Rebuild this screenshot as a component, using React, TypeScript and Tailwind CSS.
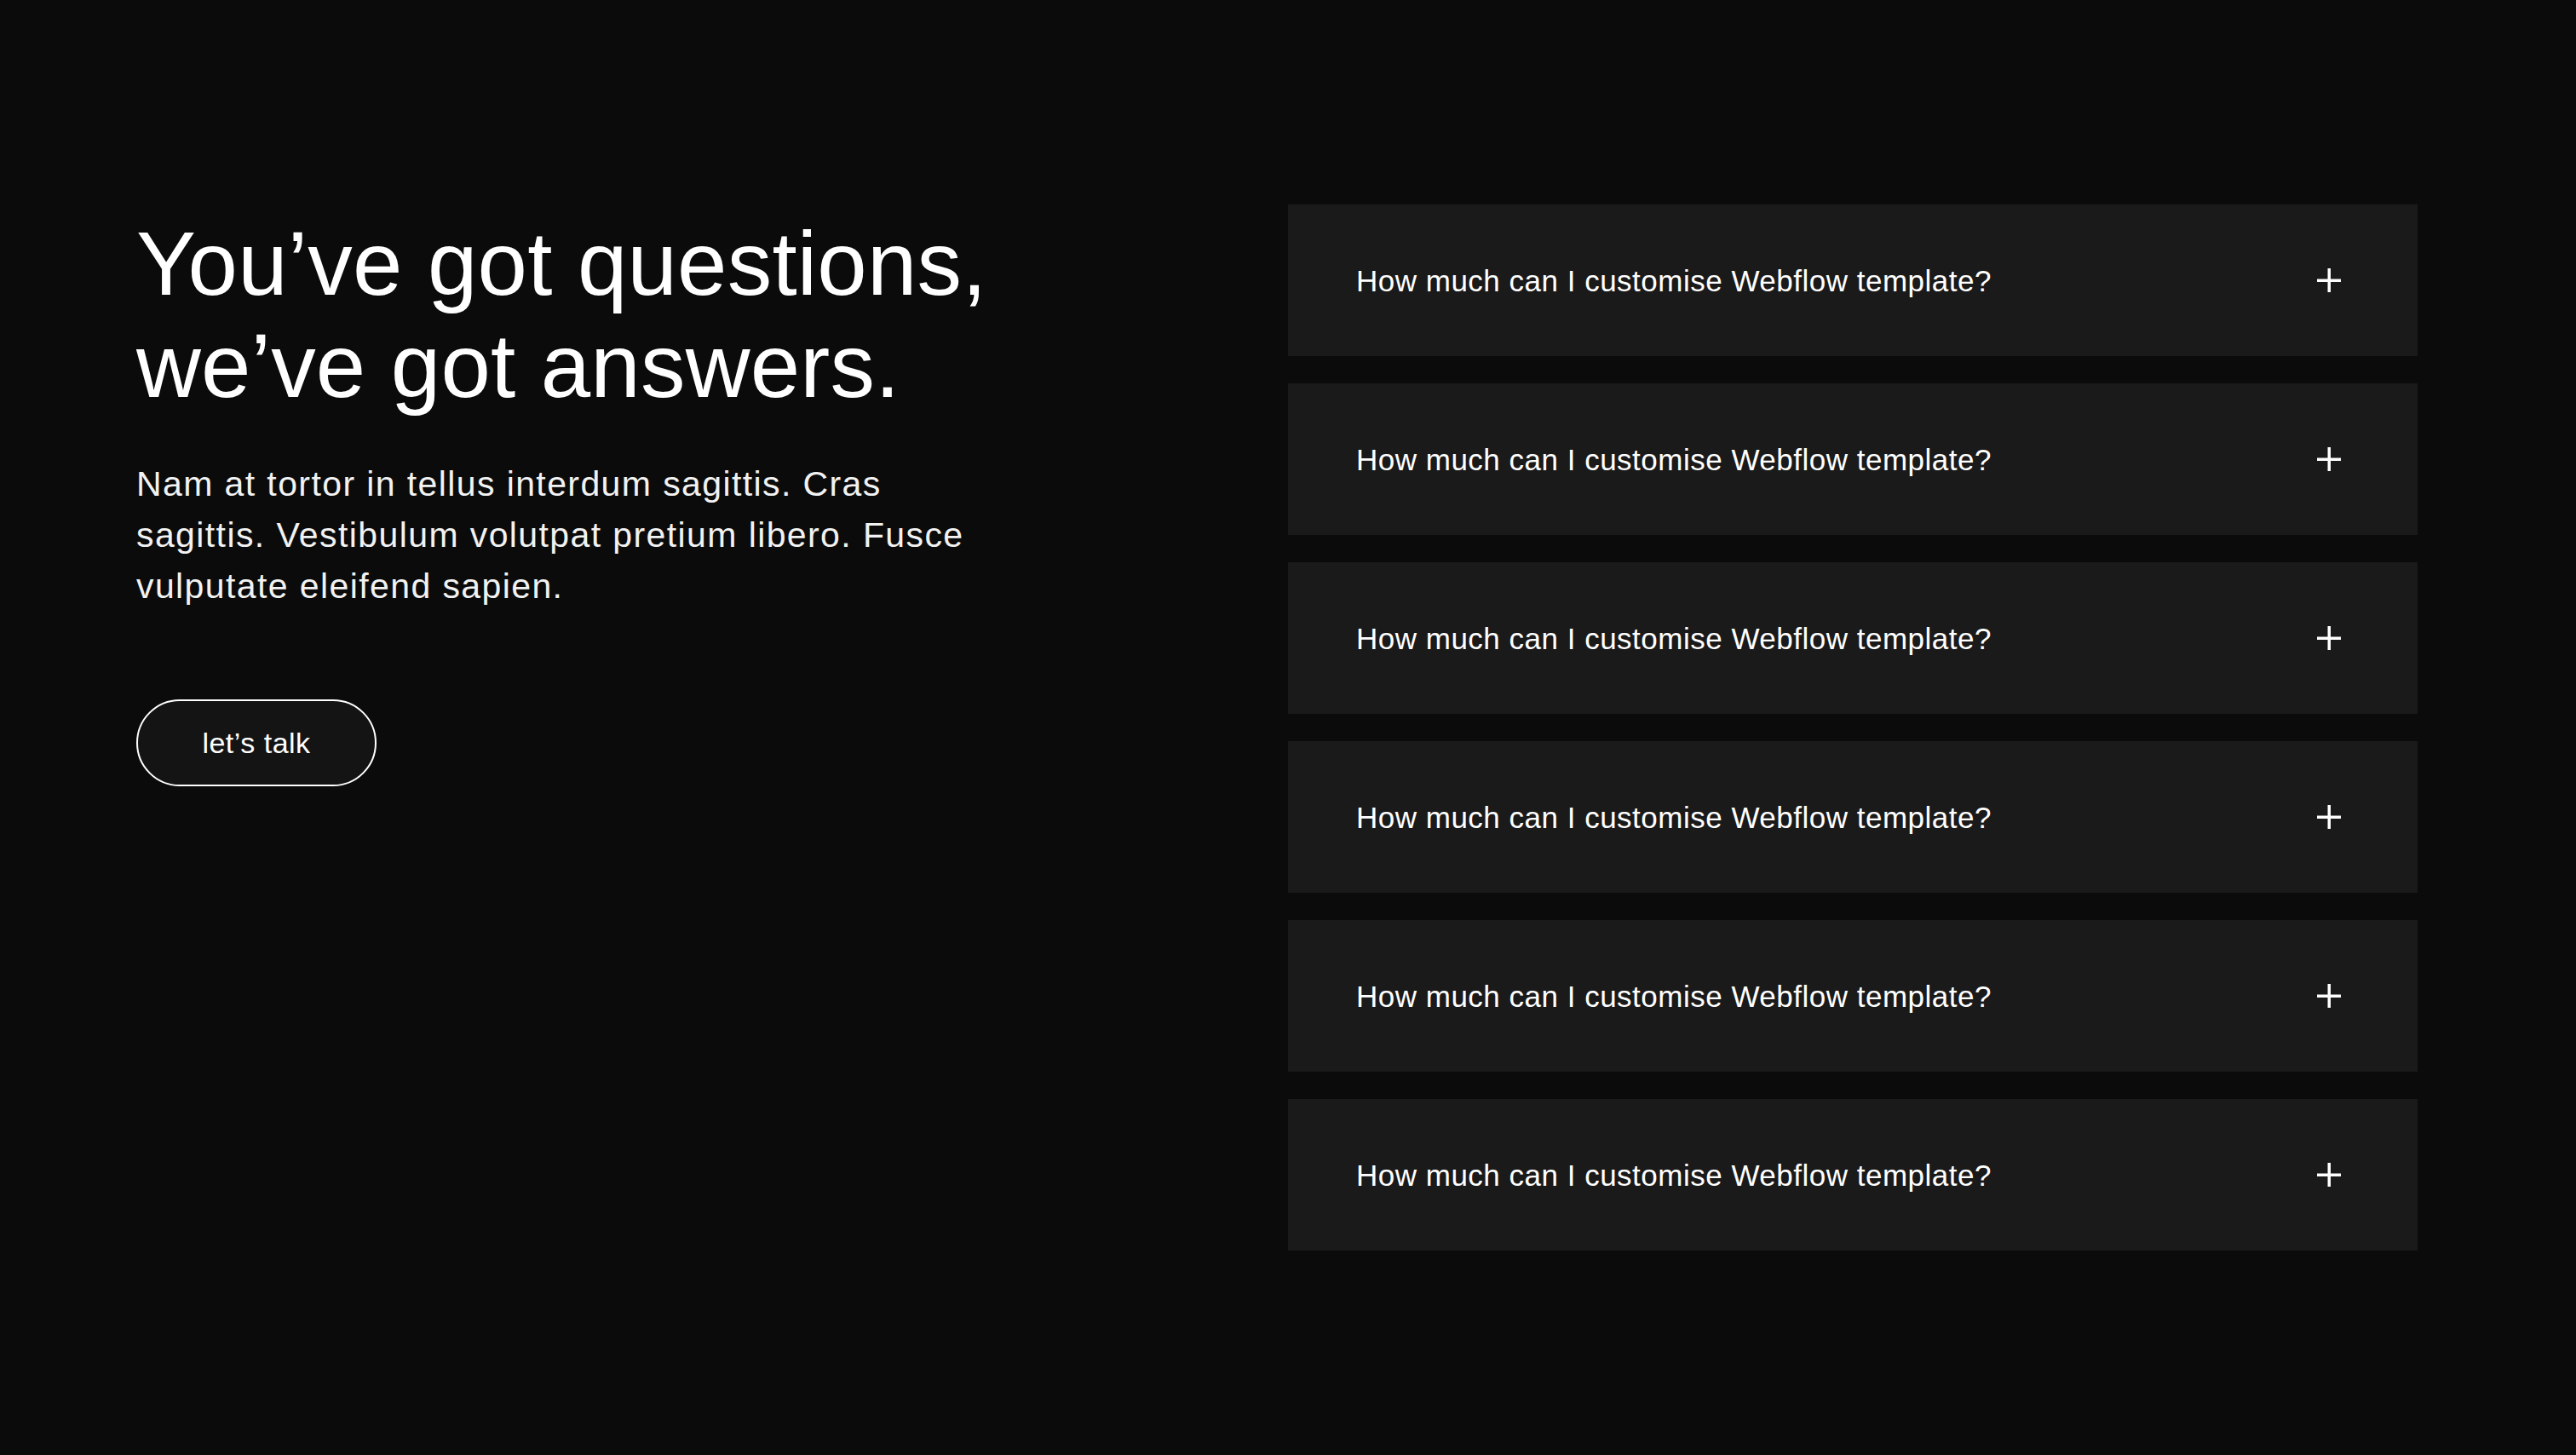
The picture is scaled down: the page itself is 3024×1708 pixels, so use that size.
import React from "react";

const questions = Array.from({ length: 6 }, () => "How much can I customise Webflow template?");

function PlusIcon() {
  return (
    <svg width="28" height="28" viewBox="0 0 28 28" fill="none">
      <rect x="12.5" y="0" width="3.5" height="28" fill="#ffffff" />
      <rect x="0" y="12.5" width="28" height="3.5" fill="#ffffff" />
    </svg>
  );
}

export default function App() {
  return (
    <main
      className="min-h-screen w-full bg-[#0b0b0b] text-white"
      style={{ fontFamily: '"Helvetica Neue", "Liberation Sans", Arial, sans-serif' }}
    >
      <section className="flex items-start justify-between pl-[160px] pr-[186px] pt-[240px] pb-[240px]">
        {/* Left column */}
        <div className="w-[1030px] flex flex-col items-start">
          <h1 className="mt-[10px] text-[105px] leading-[120px] font-light tracking-[0.2px]">
            You’ve got questions,
            <br />
            we’ve got answers.
          </h1>
          <p className="mt-[48px] w-[1000px] text-[41px] leading-[60px] font-light tracking-[1.4px] text-[#f2f2f2]">
            Nam at tortor in tellus interdum sagittis. Cras sagittis. Vestibulum volutpat pretium libero. Fusce vulputate eleifend sapien.
          </p>
          <a
            href="#"
            className="mt-[103px] flex h-[102px] w-[282px] items-center justify-center rounded-full border-2 border-white bg-[#141414] text-[34px] font-light tracking-[0.5px]"
          >
            let’s talk
          </a>
        </div>

        {/* FAQ list */}
        <div className="w-[1326px] flex flex-col gap-[32px]">
          {questions.map((q, i) => (
            <button
              key={i}
              className="flex h-[178px] w-full items-center justify-between bg-[#1a1a1a] pl-[80px] pr-[90px] text-left"
            >
              <span className="text-[35px] leading-none tracking-[0.5px]">{q}</span>
              <PlusIcon />
            </button>
          ))}
        </div>
      </section>
    </main>
  );
}
